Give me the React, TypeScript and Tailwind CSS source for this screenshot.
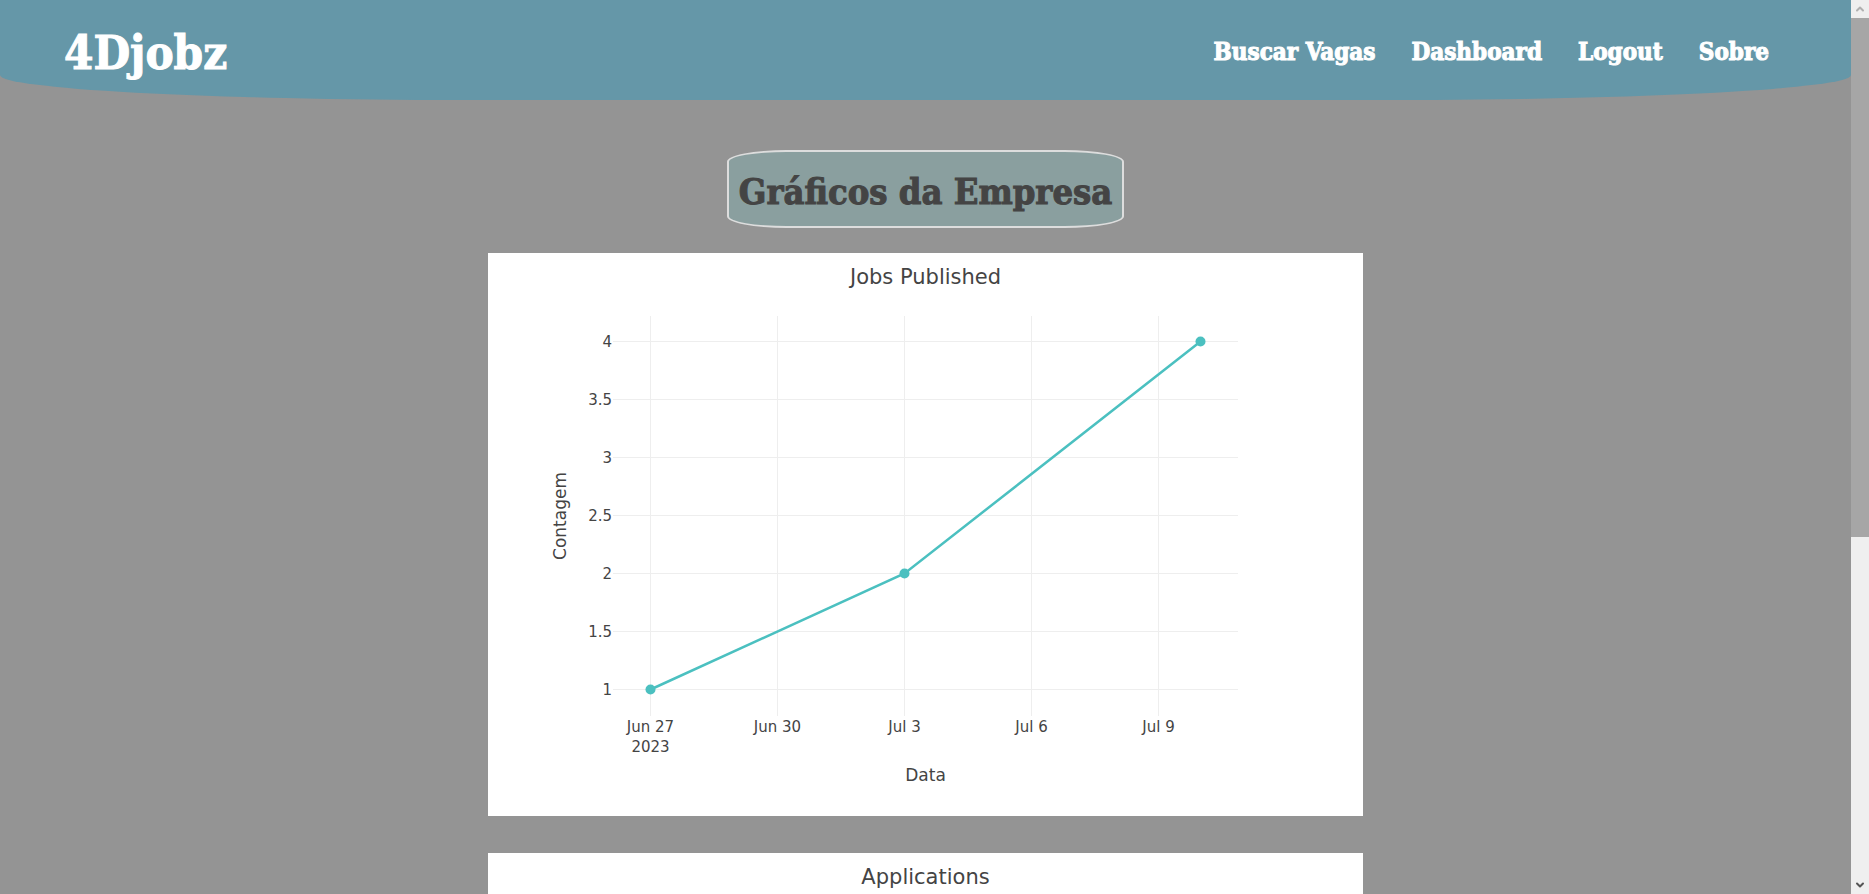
import React from "react";
import { ChevronDown, ChevronUp } from "lucide-react";

const slab =
  "font-['Roboto_Slab','DejaVu_Serif_Condensed','DejaVu_Serif',serif] font-bold [-webkit-text-stroke:1px_currentColor]";

const links = ["Buscar Vagas", "Dashboard", "Logout", "Sobre"];

const xTicks = [
  { x: 162.5, label: "Jun 27", year: "2023" },
  { x: 289.5, label: "Jun 30" },
  { x: 416.5, label: "Jul 3" },
  { x: 543.5, label: "Jul 6" },
  { x: 670.5, label: "Jul 9" },
];

const yTicks = [4, 3.5, 3, 2.5, 2, 1.5, 1];
const yFor = (value: number) => 436.5 - (value - 1) * 116;

type Point = { x: number; value: number };

const published: Point[] = [
  { x: 162.5, value: 1 },
  { x: 416.5, value: 2 },
  { x: 712.5, value: 4 },
];

function Plot({ points }: { points: Point[] }) {
  return (
    <>
      <g stroke="#eeeeee" strokeWidth="1">
        {xTicks.map((t) => (
          <line key={t.x} x1={t.x} x2={t.x} y1="63" y2="463" />
        ))}
        {yTicks.map((v) => (
          <line key={v} x1="125" x2="750" y1={yFor(v)} y2={yFor(v)} />
        ))}
      </g>
      <polyline
        points={points.map((p) => `${p.x},${yFor(p.value)}`).join(" ")}
        fill="none"
        stroke="#4bc0c0"
        strokeWidth="2.5"
      />
      {points.map((p) => (
        <circle key={p.x} cx={p.x} cy={yFor(p.value)} r="5" fill="#4bc0c0" />
      ))}
      <g className="text-[15px]">
        {yTicks.map((v) => (
          <text key={v} x="124" y={yFor(v) + 5.5} textAnchor="end">
            {v}
          </text>
        ))}
        {xTicks.map((t) => (
          <text key={t.x} y="479" textAnchor="middle">
            <tspan x={t.x}>{t.label}</tspan>
            {t.year && (
              <tspan x={t.x} dy="20">
                {t.year}
              </tspan>
            )}
          </text>
        ))}
      </g>
      <g className="text-[17px]">
        <text x="437.5" y="528" textAnchor="middle">
          Data
        </text>
        <text transform="translate(78 263) rotate(-90)" textAnchor="middle">
          Contagem
        </text>
      </g>
    </>
  );
}

function ChartCard({ title, points }: { title: string; points?: Point[] }) {
  return (
    <svg
      viewBox="0 0 875 563"
      role="img"
      aria-label={title}
      className="block w-[875px] max-w-full shrink-0 bg-white fill-[#444] font-['DejaVu_Sans',sans-serif]"
    >
      <text x="437.5" y="31" textAnchor="middle" className="text-[21px]">
        {title}
      </text>
      {points && <Plot points={points} />}
    </svg>
  );
}

export default function App() {
  return (
    <div className="flex h-screen bg-[#949494]">
      <div className="min-w-0 flex-1 overflow-hidden">
        <header
          className={`flex h-[100px] items-center justify-between rounded-b-[25%] bg-[#6597a8] pt-1 pr-[82px] pl-16 text-white ${slab}`}
        >
          <a href="#" className="text-[47px] leading-none">
            4Djobz
          </a>
          <nav className="flex gap-9 text-[24px]">
            {links.map((link) => (
              <a key={link} href="#">
                {link}
              </a>
            ))}
          </nav>
        </header>
        <main className="flex flex-col items-center pt-[50px]">
          <h1
            className={`rounded-[15%] border-2 border-[#dddddd] bg-[#8a9f9f] px-[10px] pt-[14px] pb-[10px] text-[36px] leading-[50px] whitespace-nowrap text-[#444] ${slab}`}
          >
            Gráficos da Empresa
          </h1>
          <div className="mt-[25px] flex w-full flex-col items-center gap-[37px]">
            <ChartCard title="Jobs Published" points={published} />
            <ChartCard title="Applications" />
          </div>
        </main>
      </div>
      <div className="flex w-[18px] shrink-0 flex-col bg-[#efefef]" aria-hidden="true">
        <div className="flex h-[18px] items-center justify-center text-[#b0b0b0]">
          <ChevronUp size={12} strokeWidth={4} />
        </div>
        <div className="h-[519px] bg-[#a6a6a6]" />
        <div className="mt-auto flex h-[18px] items-center justify-center text-[#555]">
          <ChevronDown size={12} strokeWidth={4} />
        </div>
      </div>
    </div>
  );
}
